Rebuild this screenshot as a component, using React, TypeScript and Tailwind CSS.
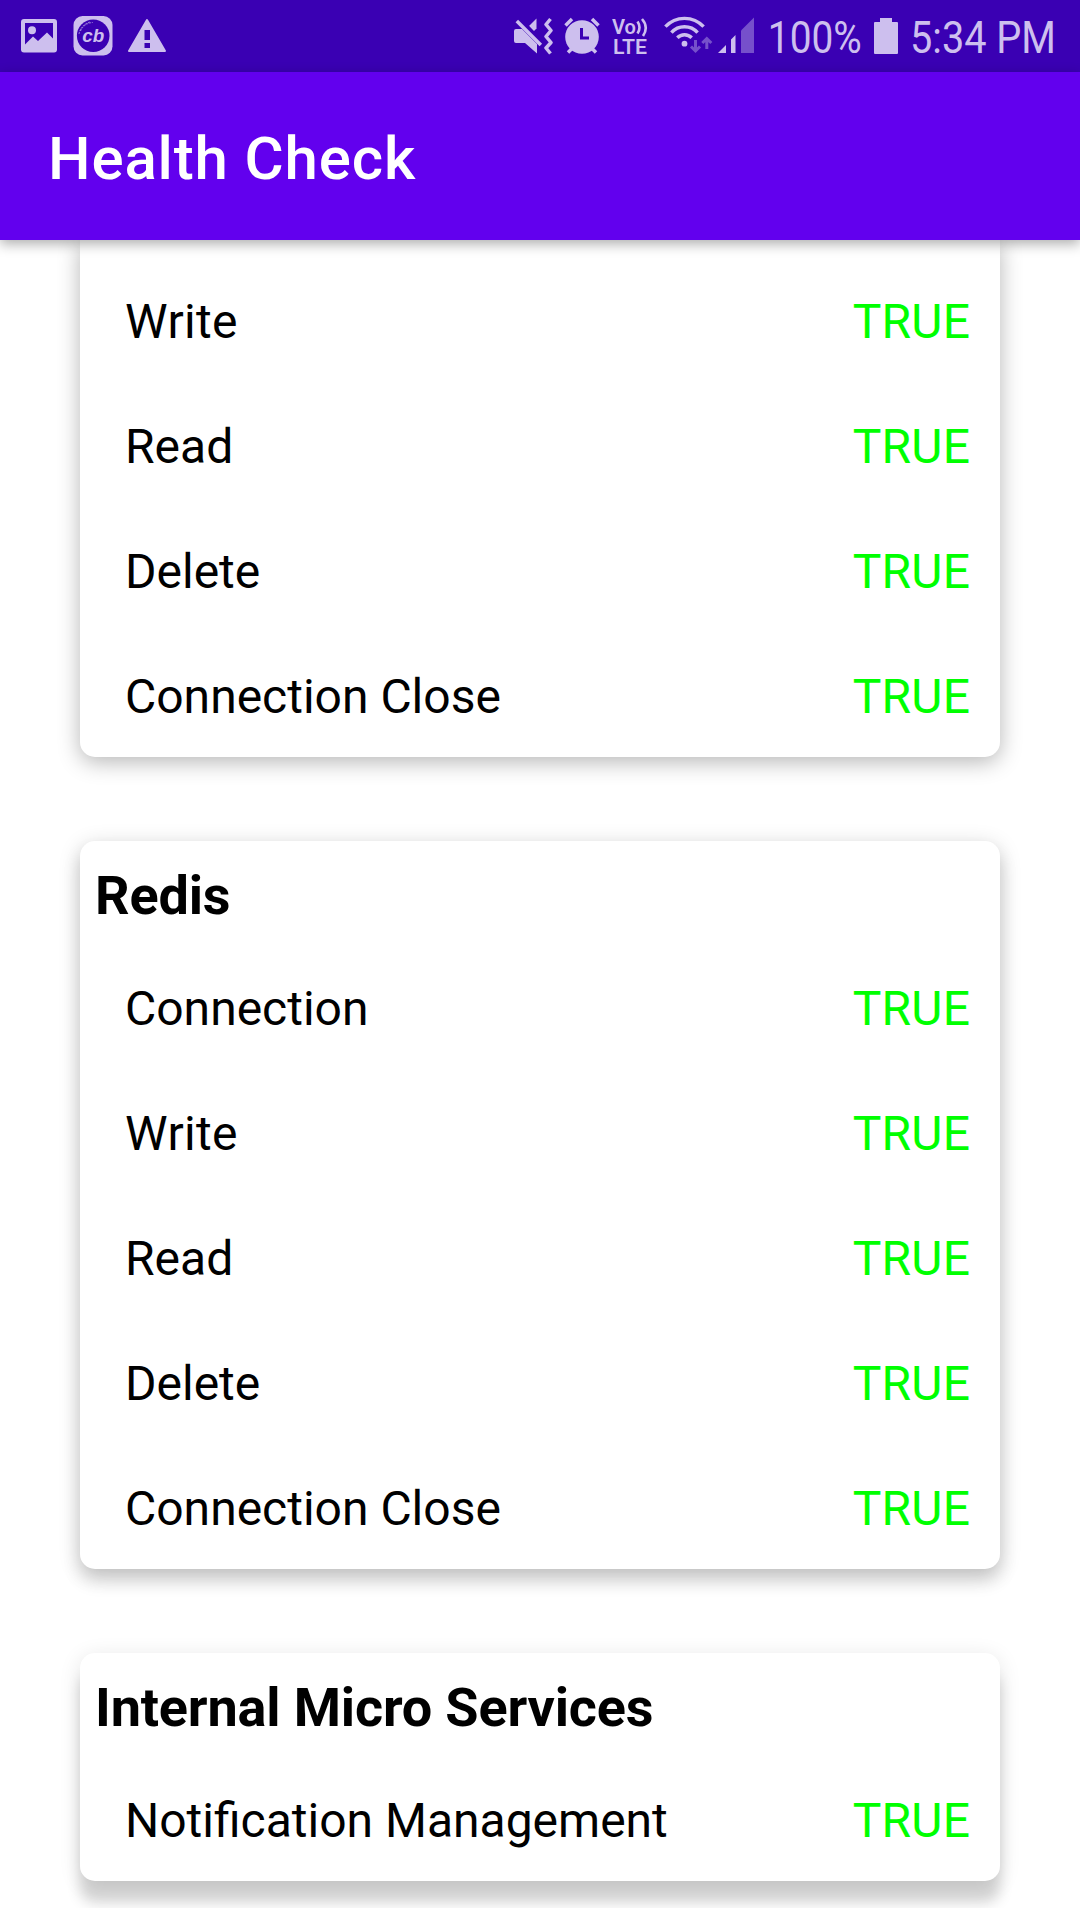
import React from "react";

const TINT = "#cdbfee";
const DIM = "#7650cb";
const BAR = "#3a00b3";

function PictureIcon() {
  return (
    <svg className="ml-[21px] h-[72px] w-9 shrink-0" viewBox="21 0 36 72" fill={TINT}>
      <path fillRule="evenodd" d="M24 19H54Q57 19 57 22V49.500Q57 52.500 54 52.500H24Q21 52.500 21 49.500V22Q21 19 24 19ZM25 23V44.500L33 36.500L38 41L47 32.500L53 38.500V23Z" />
      <circle cx="32" cy="30.200" r="4" />
    </svg>
  );
}

function CricbuzzIcon() {
  return (
    <svg className="ml-4 h-[72px] w-10 shrink-0" viewBox="73 0 40 72">
      <rect x="73.500" y="16" width="39" height="39.500" rx="9" fill={TINT} />
      <circle cx="93.200" cy="35.800" r="16.300" fill={BAR} />
      <path d="M79 34A15 15 0 0 1 90 22M80.500 31A14 14 0 0 1 93 22.500" fill="none" stroke={TINT} strokeWidth="1" strokeDasharray="2 1" opacity=".65" />
      <text x="93.300" y="42" textAnchor="middle" textLength="22" lengthAdjust="spacingAndGlyphs" fontFamily="Liberation Sans, sans-serif" fontSize="18.500" fontWeight="700" fontStyle="italic" fill={TINT}>cb</text>
    </svg>
  );
}

function WarningIcon() {
  return (
    <svg className="ml-[14px] h-[72px] w-10 shrink-0" viewBox="127 0 40 72">
      <path d="M147 20L165 51H129Z" fill={TINT} stroke={TINT} strokeWidth="2" strokeLinejoin="round" />
      <path d="M144.500 30H150V40H144.500ZM144.500 43H150V48H144.500Z" fill={BAR} />
    </svg>
  );
}

function VibrateIcon() {
  return (
    <svg className="h-[72px] w-10 shrink-0" viewBox="513 0 40 72" fill={TINT}>
      <path d="M529 26L536.500 18.500V28.500L533.500 31.500Z" />
      <path d="M516 29H522L537 44V53.500L525 43H516Q514 43 514 41V31Q514 29 516 29Z" />
      <path d="M519 18.500L543.500 43" stroke={BAR} strokeWidth="3.500" />
      <path d="M516.800 21L540.800 45" stroke={TINT} strokeWidth="3.500" />
      <path d="M550.500 19L546 24.500L551 30.500L546 36.500L551 42.500L546 48L550.500 53.500" fill="none" stroke={TINT} strokeWidth="3.500" strokeLinejoin="round" />
    </svg>
  );
}

function AlarmIcon() {
  return (
    <svg className="ml-[11px] h-[72px] w-9 shrink-0" viewBox="564 0 36 72" fill="none" stroke={TINT} strokeWidth="3.500">
      <circle cx="582" cy="37" r="16.800" fill={TINT} stroke="none" />
      <path d="M565.500 25.500L572 19M592 19L598.500 25.500M568 52.500L572.500 48M596 52.500L591.500 48" />
      <path d="M581.500 28V38H589" stroke={BAR} strokeWidth="3" />
    </svg>
  );
}

function VolteIcon() {
  return (
    <svg className="ml-3 h-[72px] w-9 shrink-0" viewBox="612 0 36 72" fill={TINT} fontFamily="Roboto, sans-serif" fontWeight="600">
      <text x="612" y="33.500" fontSize="20" textLength="24" lengthAdjust="spacingAndGlyphs">Vo</text>
      <text x="613" y="53.500" fontSize="21" textLength="34" lengthAdjust="spacingAndGlyphs">LTE</text>
      <path d="M637.500 21.500Q641.500 27.500 637.500 33.500M642 19Q649 27 643 36" fill="none" stroke={TINT} strokeWidth="2.600" />
    </svg>
  );
}

function WifiIcon() {
  return (
    <svg className="ml-4 h-[72px] w-[50px] shrink-0" viewBox="664 0 50 72" fill="none" stroke={TINT} strokeWidth="3.400">
      <circle cx="684.500" cy="43.700" r="2.900" fill={TINT} stroke="none" />
      <path d="M665.400 26.700A26 26 0 0 1 703.600 26.700M671.400 32.600A17.500 17.500 0 0 1 697.600 32.600M677.300 37.800A10 10 0 0 1 691.700 37.800" />
      <path d="M695.500 40V51M691 46.500L695.500 51L700 46.500M706.800 49V38.500M702.300 43L706.800 38.500L711.300 43" stroke={DIM} strokeWidth="3" />
    </svg>
  );
}

function SignalIcon() {
  return (
    <svg className="ml-1 h-[72px] w-9 shrink-0" viewBox="718 0 36 72" fill={TINT}>
      <path d="M718 53L726 45V53ZM731 53V39.500L735.500 35V53Z" />
      <path d="M741 53V30.500L754 17.500V53Z" fill={DIM} />
    </svg>
  );
}

function BatteryIcon() {
  return (
    <svg className="ml-[11px] h-[72px] w-6 shrink-0" viewBox="874 0 24 72" fill={TINT}>
      <path d="M880 18H892V22H897Q898 22 898 23V53Q898 54 897 54H875Q874 54 874 53V23Q874 22 875 22H880Z" />
    </svg>
  );
}

function StatusText({ text, className, x, length }: { text: string; className: string; x: number; length: number }) {
  return (
    <svg className={className} fill={TINT} fontFamily="Roboto, sans-serif" fontSize="45">
      <text x={x} y="53" textLength={length} lengthAdjust="spacingAndGlyphs">{text}</text>
    </svg>
  );
}

function StatusBar() {
  return (
    <div className="flex h-[72px] items-center justify-between bg-[#3a00b3]">
      <div className="flex">
        <PictureIcon />
        <CricbuzzIcon />
        <WarningIcon />
      </div>
      <div className="flex pr-[22px]">
        <VibrateIcon />
        <AlarmIcon />
        <VolteIcon />
        <WifiIcon />
        <SignalIcon />
        <StatusText text="100%" className="ml-[13px] h-[72px] w-24 shrink-0 overflow-visible" x={0.8} length={94} />
        <BatteryIcon />
        <StatusText text="5:34 PM" className="ml-3 h-[72px] w-[148px] shrink-0 overflow-visible" x={0} length={146} />
      </div>
    </div>
  );
}

function Rows({ items }: { items: string[] }) {
  return (
    <ul className="flex flex-col gap-[68px] pr-[30px] pb-8 pl-[45px] text-5xl">
      {items.map((item) => (
        <li key={item} className="flex justify-between leading-[57px]">
          <span className={item === "Write" ? "tracking-[0.3px]" : undefined}>{item}</span>
          <span className="-mr-[0.2px] tracking-[0.2px] text-[#00ff00]">TRUE</span>
        </li>
      ))}
    </ul>
  );
}

function Heading({ children }: { children: string }) {
  return <h2 className="mb-[52px] pt-[23px] pl-[15px] text-[54px] leading-[64px] font-bold tracking-[-0.16px]">{children}</h2>;
}

export default function App() {
  return (
    <div className="flex h-[1920px] w-[1080px] flex-col overflow-hidden bg-white font-['Roboto',sans-serif] text-black">
      <StatusBar />
      <header className="relative z-10 flex h-[168px] shrink-0 items-center bg-[#6200ee] pt-1.5 pl-12 shadow-[0_4px_12px_rgba(0,0,0,0.32)]">
        <h1 className="text-6xl font-medium tracking-[0.85px] text-white">Health Check</h1>
      </header>
      <main className="flex h-[1668px] shrink-0 flex-col gap-[84px] overflow-hidden px-20">
        <section className="rounded-b-[15px] bg-white pt-[53px] shadow-[0_5px_22px_rgba(0,0,0,0.29)]">
          <Rows items={["Write", "Read", "Delete", "Connection Close"]} />
        </section>
        <section className="rounded-[15px] bg-white shadow-[0_12px_18px_rgba(0,0,0,0.14),0_4px_22px_rgba(0,0,0,0.16)]">
          <Heading>Redis</Heading>
          <Rows items={["Connection", "Write", "Read", "Delete", "Connection Close"]} />
        </section>
        <section className="rounded-[15px] bg-white shadow-[0_22px_14px_rgba(0,0,0,0.16),0_4px_22px_rgba(0,0,0,0.11)]">
          <Heading>Internal Micro Services</Heading>
          <Rows items={["Notification Management"]} />
        </section>
      </main>
    </div>
  );
}
